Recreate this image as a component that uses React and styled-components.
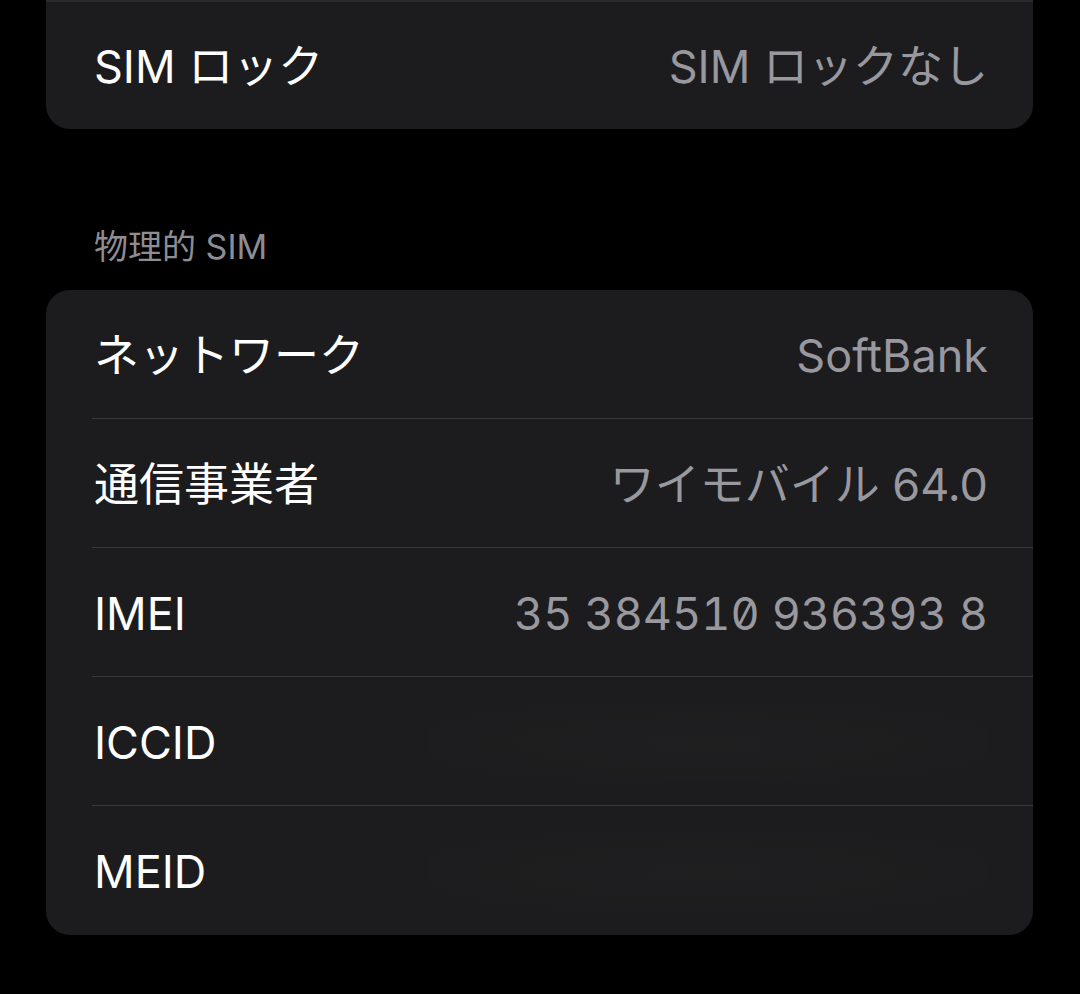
import React from "react";
import styled, { createGlobalStyle } from "styled-components";

const GlobalStyle = createGlobalStyle`
  html, body {
    margin: 0;
    padding: 0;
    background: #000;
  }
  body {
    font-family: Inter, "Noto Sans CJK JP", sans-serif;
    -webkit-font-smoothing: antialiased;
  }
`;

const simRows = [
  { label: "ネットワーク", value: "SoftBank" },
  { label: "通信事業者", value: "ワイモバイル 64.0" },
  { label: "IMEI", value: "35 384510 936393 8", mono: true },
  { label: "ICCID", value: "", hidden: true },
  { label: "MEID", value: "", hidden: true },
];

function App() {
  return (
    <Page>
      <GlobalStyle />
      <TopCard>
        <Row $height={127}>
          <Label>SIM ロック</Label>
          <Value>SIM ロックなし</Value>
        </Row>
      </TopCard>

      <SectionHeader>物理的 SIM</SectionHeader>

      <Card>
        {simRows.map((row, i) => (
          <Row key={row.label} $height={129} $divider={i < simRows.length - 1}>
            <Label>{row.label}</Label>
            {row.hidden ? <Smudge /> : <Value $mono={row.mono}>{row.value}</Value>}
          </Row>
        ))}
      </Card>
    </Page>
  );
}

export default App;

const Page = styled.div`
  width: 1080px;
  height: 994px;
  box-sizing: border-box;
  padding: 0 47px 0 46px;
  background: #000;
  overflow: hidden;
`;

const TopCard = styled.div`
  background: #1c1c1e;
  border-top: 2px solid #2a2a2d;
  border-radius: 0 0 24px 24px;
`;

const Card = styled.div`
  background: #1c1c1e;
  border-radius: 24px;
  overflow: hidden;
`;

const SectionHeader = styled.div`
  height: 161px;
  box-sizing: border-box;
  padding: 0 0 23px 48px;
  display: flex;
  align-items: flex-end;
  color: #8d8d93;
  font-size: 34px;
  line-height: 40px;
`;

const Row = styled.div`
  position: relative;
  height: ${(p) => p.$height}px;
  box-sizing: border-box;
  padding: 3px 45px 0 48px;
  display: flex;
  align-items: center;
  justify-content: space-between;

  &::after {
    content: "";
    display: ${(p) => (p.$divider ? "block" : "none")};
    position: absolute;
    left: 46px;
    right: 0;
    bottom: 0;
    height: 1px;
    background: #38383b;
  }
`;

const Label = styled.span`
  color: #fff;
  font-size: 45px;
  line-height: 56px;
`;

const Value = styled.span`
  color: #98989e;
  font-size: 45px;
  line-height: 56px;
  font-feature-settings: ${(p) => (p.$mono ? '"tnum", "zero"' : "normal")};
`;

const Smudge = styled.div`
  width: 560px;
  height: 80px;
  border-radius: 40px;
  background: radial-gradient(ellipse at center, rgba(36, 34, 34, 0.35), rgba(28, 28, 30, 0));
`;
